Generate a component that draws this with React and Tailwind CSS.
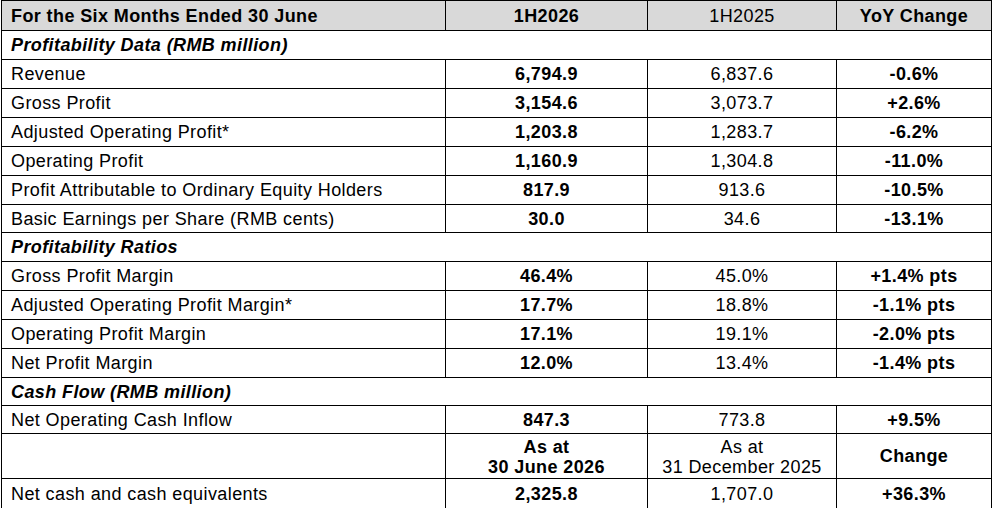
import React from "react";

const rows = [
  { type: "head" },
  { type: "section", label: "Profitability Data (RMB million)" },
  { label: "Revenue", a: "6,794.9", b: "6,837.6", c: "-0.6%" },
  { label: "Gross Profit", a: "3,154.6", b: "3,073.7", c: "+2.6%" },
  { label: "Adjusted Operating Profit*", a: "1,203.8", b: "1,283.7", c: "-6.2%" },
  { label: "Operating Profit", a: "1,160.9", b: "1,304.8", c: "-11.0%" },
  { label: "Profit Attributable to Ordinary Equity Holders", a: "817.9", b: "913.6", c: "-10.5%" },
  { label: "Basic Earnings per Share (RMB cents)", a: "30.0", b: "34.6", c: "-13.1%", h: "h-[28px]" },
  { type: "section", label: "Profitability Ratios" },
  { label: "Gross Profit Margin", a: "46.4%", b: "45.0%", c: "+1.4% pts" },
  { label: "Adjusted Operating Profit Margin*", a: "17.7%", b: "18.8%", c: "-1.1% pts" },
  { label: "Operating Profit Margin", a: "17.1%", b: "19.1%", c: "-2.0% pts" },
  { label: "Net Profit Margin", a: "12.0%", b: "13.4%", c: "-1.4% pts" },
  { type: "section", label: "Cash Flow (RMB million)", h: "h-[28px]" },
  { label: "Net Operating Cash Inflow", a: "847.3", b: "773.8", c: "+9.5%", h: "h-[28px]" },
  { type: "asat" },
  { label: "Net cash and cash equivalents", a: "2,325.8", b: "1,707.0", c: "+36.3%", last: true },
];

const App = () => {
  return (
    <div className="w-[993px] h-[508px] bg-white text-black text-[18px] leading-none tracking-[0.4px]" style={{ fontFamily: '"Liberation Sans", Arial, sans-serif' }}>
      <div className="ml-[1px] w-[991px] border border-black">
        {rows.map((r, i) => {
          if (r.type === "head") {
            return (
              <div key={i} className="flex h-[30px] border-b border-black bg-[#d9d9d9]">
                <div className="w-[444px] border-r border-black flex items-center pl-[9px] font-bold">For the Six Months Ended 30 June</div>
                <div className="w-[202px] border-r border-black flex items-center justify-center font-bold">1H2026</div>
                <div className="w-[189px] border-r border-black flex items-center justify-center">1H2025</div>
                <div className="flex-1 flex items-center justify-center font-bold">YoY Change</div>
              </div>
            );
          }
          if (r.type === "section") {
            return (
              <div key={i} className={`flex items-center ${r.h || "h-[29px]"} border-b border-black pl-[9px] font-bold italic`}>
                {r.label}
              </div>
            );
          }
          if (r.type === "asat") {
            return (
              <div key={i} className="flex h-[45px] border-b border-black">
                <div className="w-[444px] border-r border-black"></div>
                <div className="w-[202px] border-r border-black flex flex-col items-center justify-center font-bold leading-[20px] pt-[1px]">
                  <span>As at</span>
                  <span>30 June 2026</span>
                </div>
                <div className="w-[189px] border-r border-black flex flex-col items-center justify-center leading-[20px] pt-[1px]">
                  <span>As at</span>
                  <span>31 December 2025</span>
                </div>
                <div className="flex-1 flex items-center justify-center font-bold">Change</div>
              </div>
            );
          }
          return (
            <div key={i} className={`flex ${r.h || "h-[29px]"} ${r.last ? "" : "border-b border-black"}`}>
              <div className="w-[444px] border-r border-black flex items-center pl-[9px]">{r.label}</div>
              <div className="w-[202px] border-r border-black flex items-center justify-center font-bold">{r.a}</div>
              <div className="w-[189px] border-r border-black flex items-center justify-center">{r.b}</div>
              <div className="flex-1 flex items-center justify-center font-bold">{r.c}</div>
            </div>
          );
        })}
      </div>
    </div>
  );
};

export default App;
